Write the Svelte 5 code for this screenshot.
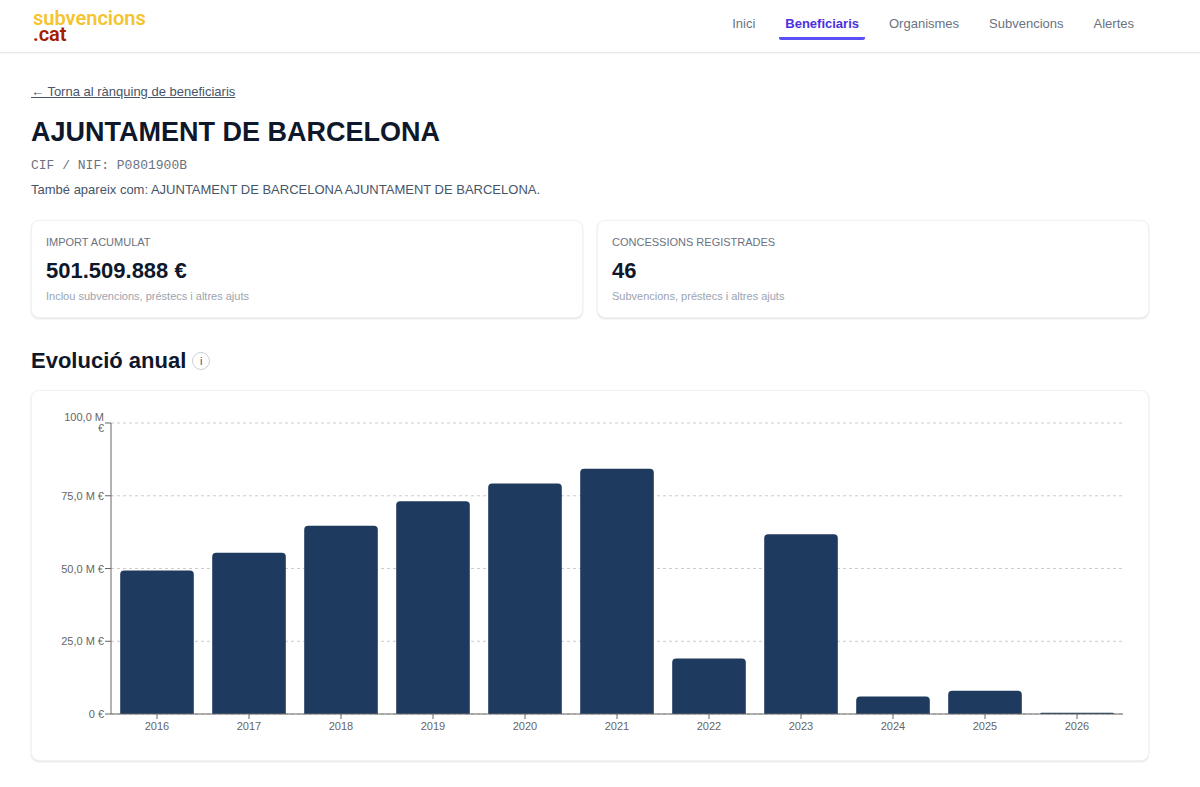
<script lang="ts">
	interface YearTotal {
		year: number;
		amount: number;
	}

	const navItems = [
		{ label: 'Inici', href: '#inici' },
		{ label: 'Beneficiaris', href: '#beneficiaris', active: true },
		{ label: 'Organismes', href: '#organismes' },
		{ label: 'Subvencions', href: '#subvencions' },
		{ label: 'Alertes', href: '#alertes' }
	];

	const stats = [
		{
			label: 'Import acumulat',
			value: '501.509.888 €',
			note: 'Inclou subvencions, préstecs i altres ajuts'
		},
		{
			label: 'Concessions registrades',
			value: '46',
			note: 'Subvencions, préstecs i altres ajuts'
		}
	];

	// Amounts in millions of euros
	const totals: YearTotal[] = [
		{ year: 2016, amount: 49.3 },
		{ year: 2017, amount: 55.4 },
		{ year: 2018, amount: 64.7 },
		{ year: 2019, amount: 73.1 },
		{ year: 2020, amount: 79.2 },
		{ year: 2021, amount: 84.3 },
		{ year: 2022, amount: 19.1 },
		{ year: 2023, amount: 61.8 },
		{ year: 2024, amount: 6.0 },
		{ year: 2025, amount: 8.0 },
		{ year: 2026, amount: 0.4 }
	];

	const ticks = [
		{ value: 0, lines: ['0 €'] },
		{ value: 25, lines: ['25,0 M €'] },
		{ value: 50, lines: ['50,0 M €'] },
		{ value: 75, lines: ['75,0 M €'] },
		{ value: 100, lines: ['100,0 M', '€'] }
	];

	const height = 337;
	const margin = { top: 16, right: 9, bottom: 30, left: 63 };
	const plotHeight = height - margin.top - margin.bottom;
	const baseline = margin.top + plotHeight;
	const radius = 4;

	let width = $state(1084);
	let plotRight = $derived(width - margin.right);
	let band = $derived((plotRight - margin.left) / totals.length);
	let barWidth = $derived(band * 0.8);

	function y(value: number) {
		return baseline - (value / 100) * plotHeight;
	}

	// Bar with rounded top corners
	function barPath(index: number, amount: number) {
		const x = margin.left + band * index + band * 0.1;
		const top = y(amount);
		const r = Math.min(radius, baseline - top);
		return `M${x},${baseline}V${top + r}a${r},${r} 0 0 1 ${r},${-r}h${barWidth - 2 * r}a${r},${r} 0 0 1 ${r},${r}V${baseline}Z`;
	}
</script>

<header>
	<a class="logo" href="#inici">
		<span>subvencions</span>
		<span class="tld">.cat</span>
	</a>
	<nav>
		{#each navItems as item (item.label)}
			<a href={item.href} class:active={item.active} aria-current={item.active ? 'page' : undefined}>
				{item.label}
			</a>
		{/each}
	</nav>
</header>

<main>
	<a class="back" href="#beneficiaris">← Torna al rànquing de beneficiaris</a>
	<h1>AJUNTAMENT DE BARCELONA</h1>
	<p class="cif">CIF / NIF: P0801900B</p>
	<p class="alias">També apareix com: AJUNTAMENT DE BARCELONA AJUNTAMENT DE BARCELONA.</p>

	<div class="stats">
		{#each stats as stat (stat.label)}
			<div class="card stat">
				<p class="label">{stat.label}</p>
				<p class="value">{stat.value}</p>
				<p class="note">{stat.note}</p>
			</div>
		{/each}
	</div>

	<div class="heading">
		<h2>Evolució anual</h2>
		<button type="button" aria-label="Més informació">i</button>
	</div>

	<div class="card chart">
		<div class="canvas" bind:clientWidth={width}>
			<svg {width} {height} role="img" aria-label="Evolució anual">
				{#each ticks as tick (tick.value)}
					<line class="grid" x1={margin.left} x2={plotRight} y1={y(tick.value)} y2={y(tick.value)} />
				{/each}

				{#each totals as item, index (item.year)}
					<path class="bar" d={barPath(index, item.amount)} />
				{/each}

				<line class="axis" x1={margin.left} x2={margin.left} y1={margin.top} y2={baseline} />
				<line class="axis" x1={margin.left} x2={plotRight} y1={baseline} y2={baseline} />

				{#each ticks as tick (tick.value)}
					<line class="axis" x1={margin.left - 6} x2={margin.left} y1={y(tick.value)} y2={y(tick.value)} />
					{#each tick.lines as line, row}
						<text
							class="amount"
							x={margin.left - 7}
							y={y(tick.value) + 4 - (tick.lines.length - 1) * 6 + row * 11}>{line}</text
						>
					{/each}
				{/each}

				{#each totals as item, index (item.year)}
					{@const center = margin.left + band * (index + 0.5)}
					<line class="axis" x1={center} x2={center} y1={baseline} y2={baseline + 5} />
					<text class="year" x={center} y={baseline + 16}>{item.year}</text>
				{/each}
			</svg>
		</div>
	</div>
</main>

<style>
	:global(body) {
		margin: 0;
		background: #fff;
		color: #0f172a;
		font-family: 'Liberation Sans', Arial, sans-serif;
	}

	header {
		display: flex;
		justify-content: space-between;
		align-items: flex-start;
		box-sizing: border-box;
		height: 53px;
		padding: 10px 60px 0 33px;
		border-bottom: 1px solid #e5e7eb;
		box-shadow: 0 1px 2px rgba(0, 0, 0, 0.04);
	}

	.logo {
		display: flex;
		flex-direction: column;
		color: #f4c430;
		font-family: Roboto, sans-serif;
		font-size: 20px;
		font-weight: 600;
		line-height: 16px;
		text-decoration: none;
	}

	.logo .tld {
		color: #a61c00;
	}

	nav {
		display: flex;
		gap: 18px;
	}

	nav a {
		padding: 6px 6px 5px;
		border-bottom: 3px solid transparent;
		border-radius: 2px;
		color: #6b7280;
		font-size: 13px;
		line-height: 16px;
		text-decoration: none;
	}

	nav a.active {
		border-bottom-color: #5b50f5;
		color: #4930e0;
		font-weight: 700;
	}

	main {
		padding: 29px 51px 26px 31px;
	}

	h1,
	h2,
	p {
		margin: 0;
	}

	.back {
		color: #475569;
		font-size: 13px;
		line-height: 18px;
	}

	h1 {
		margin-top: 15px;
		font-size: 27px;
		line-height: 32px;
	}

	.cif {
		margin-top: 9px;
		color: #6b7280;
		font-family: 'Liberation Mono', monospace;
		font-size: 13px;
		line-height: 18px;
	}

	.alias {
		margin-top: 6px;
		color: #475569;
		font-size: 13px;
		line-height: 18px;
	}

	.card {
		border: 1px solid #f1f2f4;
		border-radius: 8px;
		background: #fff;
		box-shadow: 0 1px 2px rgba(0, 0, 0, 0.12);
	}

	.stats {
		display: grid;
		grid-template-columns: repeat(2, 1fr);
		gap: 14px;
		margin-top: 21px;
	}

	.stat {
		padding: 14px;
	}

	.label {
		color: #6b7280;
		font-size: 11px;
		line-height: 14px;
		text-transform: uppercase;
	}

	.value {
		margin-top: 9px;
		font-size: 22px;
		font-weight: 700;
		line-height: 26px;
	}

	.note {
		margin-top: 5px;
		color: #9ca3af;
		font-size: 11px;
		line-height: 14px;
	}

	.heading {
		display: flex;
		align-items: center;
		gap: 6px;
		margin: 29px 0 15px;
	}

	h2 {
		font-size: 22px;
		line-height: 28px;
	}

	.heading button {
		width: 18px;
		height: 18px;
		padding: 0;
		border: 1px solid #cbd0d8;
		border-radius: 50%;
		background: #fff;
		color: #475569;
		font-family: inherit;
		font-size: 11px;
		line-height: 14px;
	}

	.chart {
		padding: 16px;
	}

	.canvas {
		overflow: hidden;
	}

	svg {
		display: block;
		font-size: 11px;
	}

	text {
		fill: #666;
	}

	.amount {
		text-anchor: end;
	}

	.year {
		text-anchor: middle;
	}

	.grid {
		stroke: #ccc;
		stroke-dasharray: 3 3;
	}

	.axis {
		stroke: #666;
	}

	.bar {
		fill: #1e3a5f;
	}
</style>
